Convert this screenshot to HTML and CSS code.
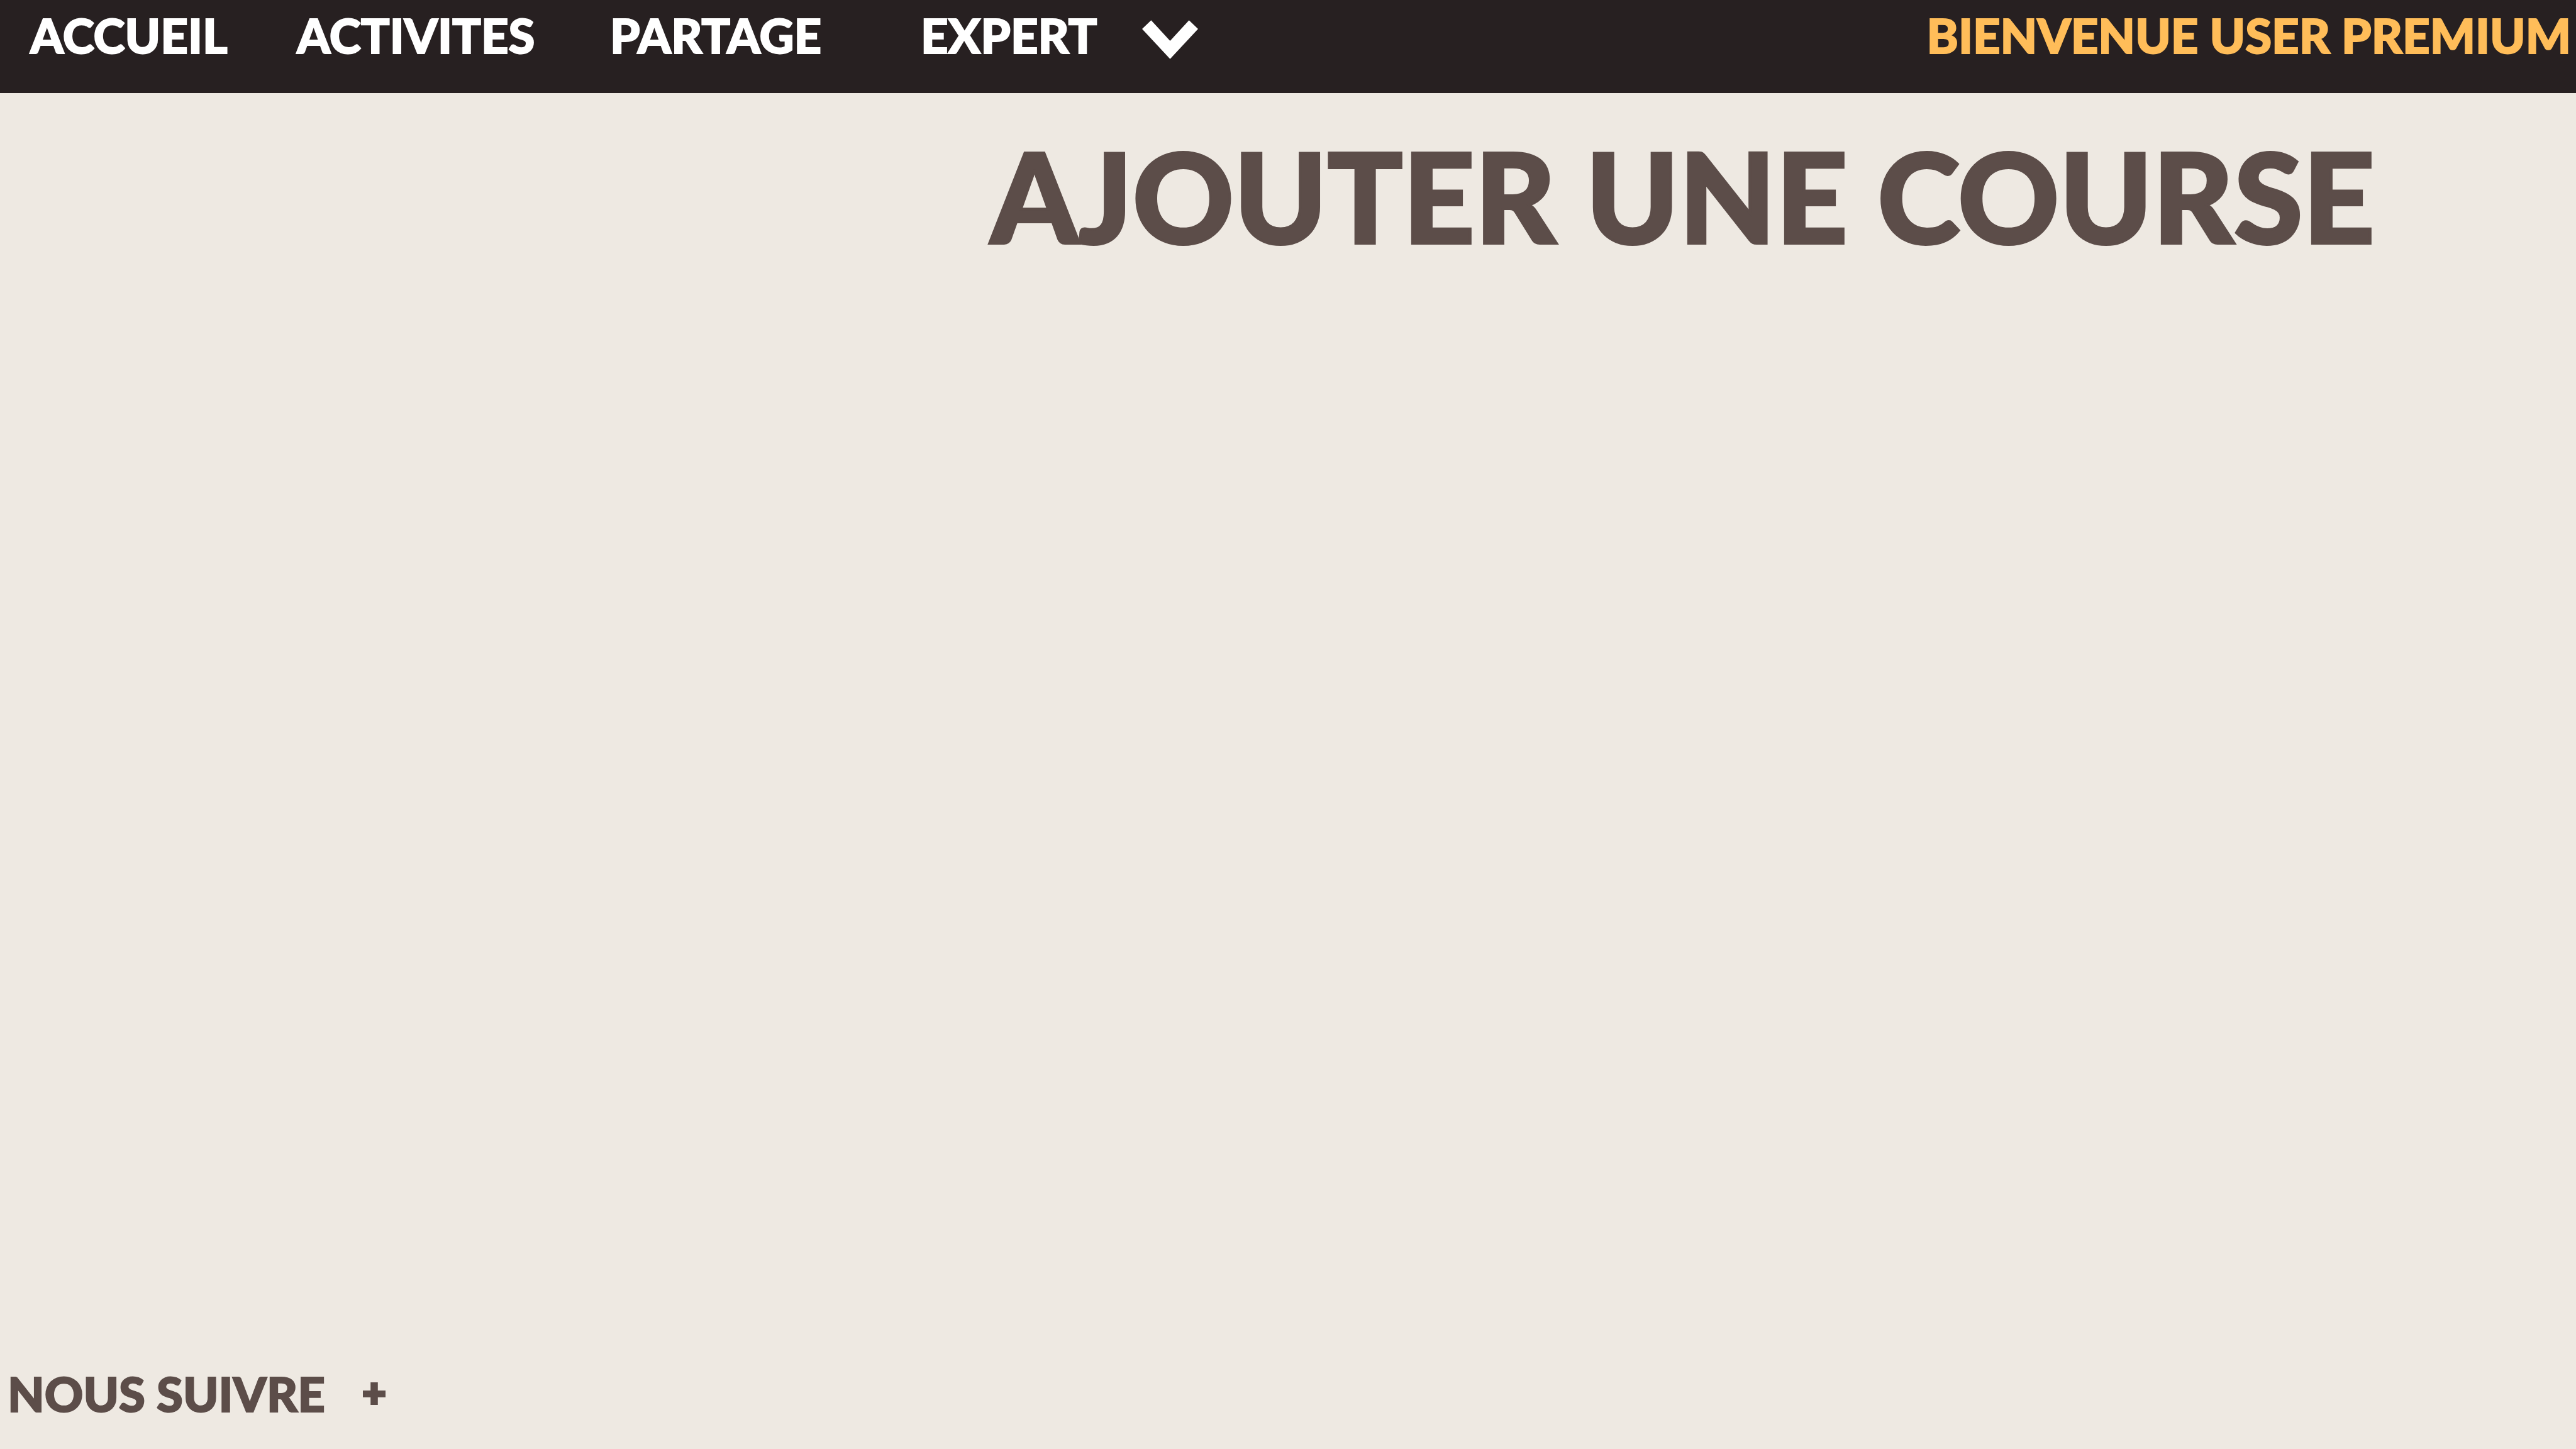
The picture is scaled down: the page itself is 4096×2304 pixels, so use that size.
FILE: index.html
```html
<!DOCTYPE html>
<html lang="fr">
<head>
<meta charset="utf-8">
<title>Ajouter une course</title>
<link rel="stylesheet" href="styles.css">
</head>
<body>
<header class="bar">
  <nav class="menu" aria-label="Menu principal">
    <a class="link" href="#accueil">ACCUEIL</a>
    <a class="link" href="#activites">ACTIVITES</a>
    <a class="link" href="#partage">PARTAGE</a>
    <a class="link" href="#expert">EXPERT</a>
    <button class="toggle" type="button" aria-label="Ouvrir le menu">
      <svg class="chevron" viewBox="0 0 130 90" aria-hidden="true"><path d="M0 20 21 0 65 48 109 0 130 20 65 90Z" fill="currentColor"/></svg>
    </button>
  </nav>
  <p class="welcome">BIENVENUE USER PREMIUM</p>
</header>
<main class="content">
  <h1 class="title">AJOUTER UNE COURSE</h1>
</main>
<footer class="footer">
  <span>NOUS SUIVRE</span>
  <button class="toggle" type="button" aria-label="Afficher les réseaux">
    <svg class="plus" viewBox="0 0 53 53" aria-hidden="true"><path d="M18 0H35V19H53V35H35V53H18V35H0V19H18Z" fill="currentColor"/></svg>
  </button>
</footer>
</body>
</html>
```
FILE: styles.css
```css
* { box-sizing: border-box; }

body {
  display: flex;
  flex-direction: column;
  min-height: 100vh;
  margin: 0;
  background: #eee9e2;
  color: #5c4d49;
  font-family: Lato, "Open Sans", sans-serif;
  font-size: 76px;
  font-weight: 900;
  line-height: 112px;
  -webkit-text-stroke: 2px currentColor;
}

.bar {
  display: flex;
  justify-content: space-between;
  height: 148px;
  padding: 0 8px 0 48px;
  background: #272021;
  color: #fff;
}

.menu {
  display: grid;
  grid-template-columns: 424px 498px 494px 352px auto;
  align-items: start;
}

.link {
  color: inherit;
  text-decoration: none;
}

.toggle {
  display: block;
  padding: 0;
  border: 0;
  background: none;
  color: inherit;
  cursor: pointer;
}

.chevron {
  display: block;
  width: 89px;
  height: 62px;
  margin-top: 32px;
}

.welcome {
  margin: 0;
  color: #ffbd59;
  white-space: nowrap;
}

.content {
  flex: 1;
  padding: 32px 320px 0 0;
}

.title {
  margin: 0;
  font-size: 199px;
  font-weight: 900;
  line-height: 260px;
  text-align: right;
  white-space: nowrap;
  -webkit-text-stroke-width: 4px;
}

.footer {
  display: flex;
  align-items: center;
  gap: 60px;
  padding: 0 12px 32px;
}

.plus {
  display: block;
  width: 36px;
  height: 36px;
}
```
